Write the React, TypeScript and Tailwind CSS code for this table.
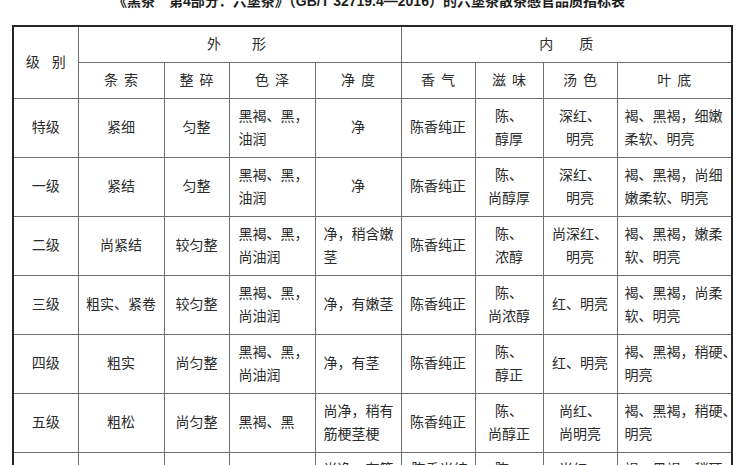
type Cell = { lines: string[]; left?: boolean; pad?: string }

const widths = [65, 86, 65, 86, 86, 74, 68, 74, 115]

const subHeads = ['条索', '整碎', '色泽', '净度', '香气', '滋味', '汤色', '叶底']

const grades: { grade: string; cells: Cell[] }[] = [
  {
    grade: '特级',
    cells: [
      { lines: ['紧细'] },
      { lines: ['匀整'] },
      { lines: ['黑褐、黑，', '油润'], left: true, pad: 'pl-[9px]' },
      { lines: ['净'] },
      { lines: ['陈香纯正'] },
      { lines: ['陈、', '醇厚'] },
      { lines: ['深红、', '明亮'] },
      { lines: ['褐、黑褐，细嫩', '柔软、明亮'], left: true, pad: 'pl-[7px]' },
    ],
  },
  {
    grade: '一级',
    cells: [
      { lines: ['紧结'] },
      { lines: ['匀整'] },
      { lines: ['黑褐、黑，', '油润'], left: true, pad: 'pl-[9px]' },
      { lines: ['净'] },
      { lines: ['陈香纯正'] },
      { lines: ['陈、', '尚醇厚'] },
      { lines: ['深红、', '明亮'] },
      { lines: ['褐、黑褐，尚细', '嫩柔软、明亮'], left: true, pad: 'pl-[7px]' },
    ],
  },
  {
    grade: '二级',
    cells: [
      { lines: ['尚紧结'] },
      { lines: ['较匀整'] },
      { lines: ['黑褐、黑，', '尚油润'], left: true, pad: 'pl-[9px]' },
      { lines: ['净，稍含嫩', '茎'], left: true, pad: 'pl-[8px]' },
      { lines: ['陈香纯正'] },
      { lines: ['陈、', '浓醇'] },
      { lines: ['尚深红、', '明亮'] },
      { lines: ['褐、黑褐，嫩柔', '软、明亮'], left: true, pad: 'pl-[7px]' },
    ],
  },
  {
    grade: '三级',
    cells: [
      { lines: ['粗实、紧卷'] },
      { lines: ['较匀整'] },
      { lines: ['黑褐、黑，', '尚油润'], left: true, pad: 'pl-[9px]' },
      { lines: ['净，有嫩茎'], left: true, pad: 'pl-[8px]' },
      { lines: ['陈香纯正'] },
      { lines: ['陈、', '尚浓醇'] },
      { lines: ['红、明亮'] },
      { lines: ['褐、黑褐，尚柔', '软、明亮'], left: true, pad: 'pl-[7px]' },
    ],
  },
  {
    grade: '四级',
    cells: [
      { lines: ['粗实'] },
      { lines: ['尚匀整'] },
      { lines: ['黑褐、黑，', '尚油润'], left: true, pad: 'pl-[9px]' },
      { lines: ['净，有茎'], left: true, pad: 'pl-[8px]' },
      { lines: ['陈香纯正'] },
      { lines: ['陈、', '醇正'] },
      { lines: ['红、明亮'] },
      { lines: ['褐、黑褐，稍硬、', '明亮'], left: true, pad: 'pl-[7px]' },
    ],
  },
  {
    grade: '五级',
    cells: [
      { lines: ['粗松'] },
      { lines: ['尚匀整'] },
      { lines: ['黑褐、黑'], left: true, pad: 'pl-[9px]' },
      { lines: ['尚净，稍有', '筋梗茎梗'], left: true, pad: 'pl-[8px]' },
      { lines: ['陈香纯正'] },
      { lines: ['陈、', '尚醇正'] },
      { lines: ['尚红、', '尚明亮'] },
      { lines: ['褐、黑褐，稍硬、', '明亮'], left: true, pad: 'pl-[7px]' },
    ],
  },
  {
    grade: '六级',
    cells: [
      { lines: ['粗松'] },
      { lines: ['欠匀整'] },
      { lines: ['黑褐、黑'], left: true, pad: 'pl-[9px]' },
      { lines: ['尚净，有筋', '梗茎梗'], left: true, pad: 'pl-[8px]' },
      { lines: ['陈香尚纯', '正'], left: true, pad: 'pl-[10px]' },
      { lines: ['陈、', '平和'] },
      { lines: ['尚红、', '欠亮'] },
      { lines: ['褐、黑褐，稍硬、', '欠亮'], left: true, pad: 'pl-[7px]' },
    ],
  },
]

function Spaced({ text, gap }: { text: string; gap: string }) {
  return (
    <div className={`flex justify-center ${gap}`}>
      {text.split('').map((ch, i) => (
        <span key={i}>{ch}</span>
      ))}
    </div>
  )
}

export default function App() {
  return (
    <div className="h-[465px] w-[745px] overflow-hidden bg-white font-['Liberation_Sans','Noto_Sans_CJK_SC',sans-serif] text-[#2b2b2b]">
      <div className="-mt-[6px] h-[14px] pr-[7px] text-center text-[14px] font-bold leading-[14px] text-[#1e1e1e]">
        《黑茶　第4部分：六堡茶》（GB/T 32719.4—2016）的六堡茶散茶感官品质指标表
      </div>

      <table className="ml-[12px] mt-[17px] w-[719px] table-fixed border-collapse border-2 border-[#262626] text-[14px]">
        <colgroup>
          {widths.map((w, i) => (
            <col key={i} style={{ width: w }} />
          ))}
        </colgroup>
        <thead>
          <tr className="h-[36px]">
            <th rowSpan={2} className="border border-[#6e6e6e] font-normal">
              <Spaced text="级别" gap="gap-[12px]" />
            </th>
            <th colSpan={4} className="border border-[#6e6e6e] font-normal">
              <div className="pr-[6px]">
                <Spaced text="外形" gap="gap-[31px]" />
              </div>
            </th>
            <th colSpan={4} className="border border-[#6e6e6e] font-normal">
              <Spaced text="内质" gap="gap-[26px]" />
            </th>
          </tr>
          <tr className="h-[36px]">
            {subHeads.map((h) => (
              <th key={h} className="border border-[#6e6e6e] font-normal">
                <Spaced text={h} gap="gap-[6px]" />
              </th>
            ))}
          </tr>
        </thead>
        <tbody>
          {grades.map((row) => (
            <tr key={row.grade} className="h-[59px]">
              <td className="border border-[#6e6e6e] text-center">{row.grade}</td>
              {row.cells.map((c, i) => (
                <td
                  key={i}
                  className={`border border-[#6e6e6e] leading-[23px] ${c.left ? `text-left ${c.pad}` : 'text-center'}`}
                >
                  {c.lines.map((l, j) => (
                    <div key={j} className="whitespace-nowrap">
                      {l}
                    </div>
                  ))}
                </td>
              ))}
            </tr>
          ))}
        </tbody>
      </table>
    </div>
  )
}
